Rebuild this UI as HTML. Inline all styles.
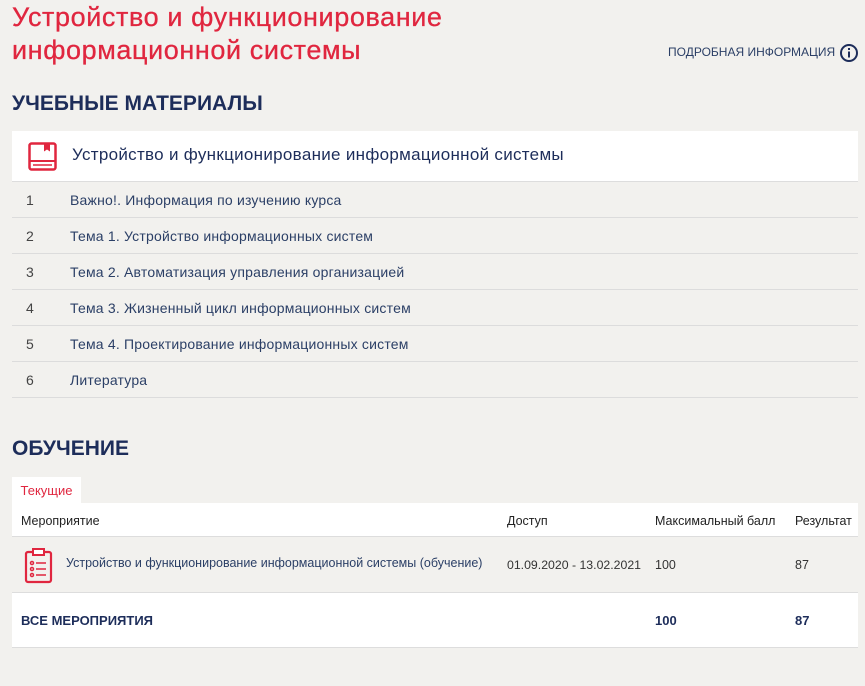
<!DOCTYPE html>
<html><head><meta charset="utf-8"><style>
body{margin:0;background:#f2f1ee;font-family:"Liberation Sans",sans-serif;width:865px;height:686px;overflow:hidden;position:relative;color:#333}
.a{position:absolute}
h1{position:absolute;left:12px;top:1px;margin:0;font-size:27px;letter-spacing:0.6px;line-height:33px;font-weight:normal;color:#e0263f;-webkit-text-stroke:0.3px #e0263f}
.h2{position:absolute;left:12px;margin:0;font-size:21px;font-weight:bold;color:#1d2d5a}
.row{position:absolute;left:12px;width:846px;height:35px;border-bottom:1px solid #dcdcdc;font-size:14px;letter-spacing:0.2px;line-height:36px;color:#2b3f66}
.row span{position:absolute;left:14px;color:#444}
.row b{position:absolute;left:58px;font-weight:normal}
.th{font-size:12.5px;color:#222}
</style></head><body>
<h1>Устройство и функционирование<br>информационной системы</h1>
<div class="a" style="left:668px;top:45px;font-size:12px;color:#2b3f66">ПОДРОБНАЯ ИНФОРМАЦИЯ</div>
<svg class="a" style="left:839px;top:43px" width="20" height="20"><circle cx="10" cy="10" r="8" fill="none" stroke="#1d2d5a" stroke-width="2"/><rect x="9" y="8.5" width="2" height="6" fill="#1d2d5a"/><rect x="9" y="5" width="2" height="2" fill="#1d2d5a"/></svg>
<div class="h2" style="top:92px">УЧЕБНЫЕ МАТЕРИАЛЫ</div>
<div class="a" style="left:12px;top:131px;width:846px;height:50px;background:#fff;border-bottom:1px solid #ddd"></div>
<svg class="a" style="left:28px;top:142px" width="30" height="29"><rect x="1.5" y="1.5" width="26" height="26" rx="2" fill="none" stroke="#e0263f" stroke-width="2.5"/><path d="M16 1.5v8l3-2 3 2v-8" fill="#e0263f"/><line x1="1.5" y1="19" x2="27.5" y2="19" stroke="#e0263f" stroke-width="2"/><line x1="5" y1="23" x2="24" y2="23" stroke="#e0263f" stroke-width="1.5"/></svg>
<div class="a" style="left:72px;top:145px;font-size:17px;letter-spacing:0.3px;color:#1d2d5a">Устройство и функционирование информационной системы</div>
<div class="row" style="top:182px"><span>1</span><b>Важно!. Информация по изучению курса</b></div>
<div class="row" style="top:218px"><span>2</span><b>Тема 1. Устройство информационных систем</b></div>
<div class="row" style="top:254px"><span>3</span><b>Тема 2. Автоматизация управления организацией</b></div>
<div class="row" style="top:290px"><span>4</span><b>Тема 3. Жизненный цикл информационных систем</b></div>
<div class="row" style="top:326px"><span>5</span><b>Тема 4. Проектирование информационных систем</b></div>
<div class="row" style="top:362px"><span>6</span><b>Литература</b></div>
<div class="h2" style="top:437px">ОБУЧЕНИЕ</div>
<div class="a" style="left:12px;top:477px;width:69px;height:26px;background:#fff;font-size:13px;line-height:28px;color:#e0263f;text-align:center">Текущие</div>
<div class="a" style="left:12px;top:503px;width:846px;height:33px;background:#fff;border-bottom:1px solid #ddd"></div>
<div class="a th" style="left:21px;top:514px">Мероприятие</div>
<div class="a th" style="left:507px;top:514px">Доступ</div>
<div class="a th" style="left:655px;top:514px">Максимальный балл</div>
<div class="a th" style="left:795px;top:514px">Результат</div>
<svg class="a" style="left:24px;top:546px" width="30" height="38"><rect x="2" y="6" width="25" height="30" rx="2" fill="none" stroke="#e0263f" stroke-width="2.2"/><path d="M9 3h11v6H9z" fill="#fff" stroke="#e0263f" stroke-width="2"/><g fill="none" stroke="#e0263f" stroke-width="1.5"><circle cx="8" cy="17" r="1.5"/><circle cx="8" cy="23" r="1.5"/><circle cx="8" cy="29" r="1.5"/><path d="M12 17h10M12 23h10M12 29h10"/></g></svg>
<div class="a" style="left:66px;top:556px;font-size:12.5px;color:#2b3f66">Устройство и функционирование информационной системы (обучение)</div>
<div class="a" style="left:507px;top:558px;font-size:12.3px">01.09.2020 - 13.02.2021</div>
<div class="a" style="left:655px;top:558px;font-size:12.5px">100</div>
<div class="a" style="left:795px;top:558px;font-size:12.5px">87</div>
<div class="a" style="left:12px;top:592px;width:846px;height:54px;background:#fff;border-top:1px solid #ddd;border-bottom:1px solid #ddd"></div>
<div class="a" style="left:21px;top:613px;font-size:13px;font-weight:bold;color:#1d2d5a">ВСЕ МЕРОПРИЯТИЯ</div>
<div class="a" style="left:655px;top:613px;font-size:13px;font-weight:bold;color:#1d2d5a">100</div>
<div class="a" style="left:795px;top:613px;font-size:13px;font-weight:bold;color:#1d2d5a">87</div>
</body></html>
